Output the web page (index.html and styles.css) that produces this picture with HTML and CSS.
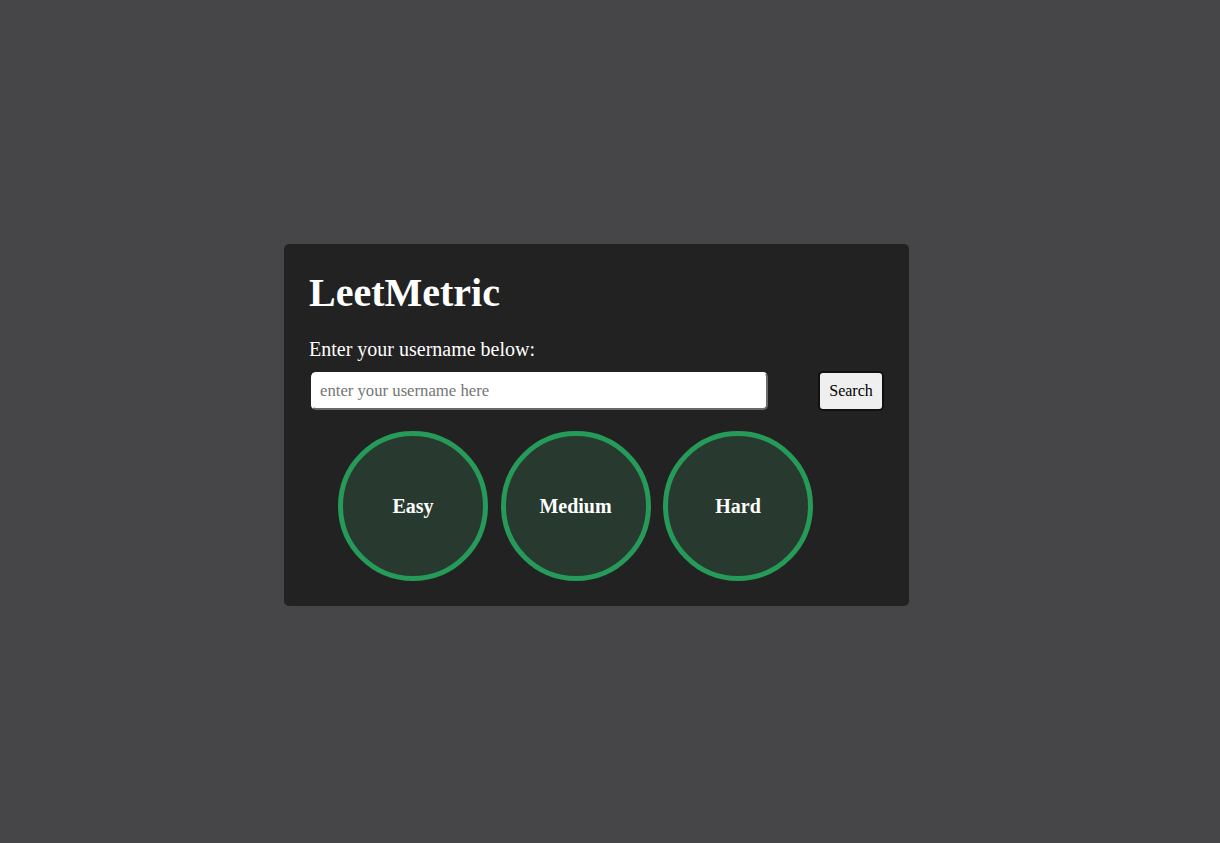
FILE: index.html
```html
<!DOCTYPE html>
<html>
<head>
<meta charset="utf-8">
<title>LeetMetric</title>
<link rel="stylesheet" href="styles.css">
</head>
<body>
<div class="page">
  <div class="card">
    <h1 class="title">LeetMetric</h1>
    <p class="label">Enter your username below:</p>
    <div class="search-row">
      <input class="user-input" type="text" placeholder="enter your username here">
      <button class="search-btn">Search</button>
    </div>
    <div class="circles">
      <div class="circle"><span>Easy</span></div>
      <div class="circle"><span>Medium</span></div>
      <div class="circle"><span>Hard</span></div>
    </div>
  </div>
</div>
</body>
</html>
```
FILE: styles.css
```css
html, body {
  margin: 0;
  padding: 0;
  background: #464648;
  font-family: "Liberation Serif", "Times New Roman", serif;
}
.page {
  height: 843px;
  display: flex;
  align-items: flex-start;
  justify-content: flex-start;
  padding-top: 244px;
  padding-left: 284px;
  box-sizing: border-box;
}
.card {
  width: 625px;
  height: 362px;
  box-sizing: border-box;
  background: #222222;
  border-radius: 5px;
  padding: 24px 25px 0 25px;
  color: #fff;
}
.title {
  margin: 0;
  font-size: 40px;
  font-weight: bold;
  line-height: 50px;
}
.label {
  margin: 19px 0 0 0;
  font-size: 20px;
  line-height: 24px;
}
.search-row {
  display: flex;
  justify-content: space-between;
  align-items: center;
  margin-top: 10px;
  padding-left: 2px;
}
.user-input {
  width: 457px;
  height: 38px;
  box-sizing: border-box;
  border: 2px solid;
  border-color: #ffffff #6a6a6a #6a6a6a #ffffff;
  border-radius: 5px;
  background: #fff;
  padding: 0 7px;
  font-family: "Liberation Serif", "Times New Roman", serif;
  font-size: 16.7px;
  color: #000;
  outline: none;
}
.user-input::placeholder {
  color: #757575;
}
.search-btn {
  width: 66px;
  height: 40px;
  box-sizing: border-box;
  background: #efefef;
  border: 2px solid #111;
  border-radius: 5px;
  font-family: "Liberation Serif", "Times New Roman", serif;
  font-size: 16px;
  color: #000;
  padding: 0;
}
.circles {
  display: flex;
  gap: 12.5px;
  margin-top: 20px;
  padding-left: 29px;
}
.circle {
  width: 150px;
  height: 150px;
  box-sizing: border-box;
  border-radius: 50%;
  border: 5px solid #259a59;
  background: #283a30;
  display: flex;
  align-items: center;
  justify-content: center;
  font-size: 20px;
  font-weight: bold;
  color: #fff;
}
```
